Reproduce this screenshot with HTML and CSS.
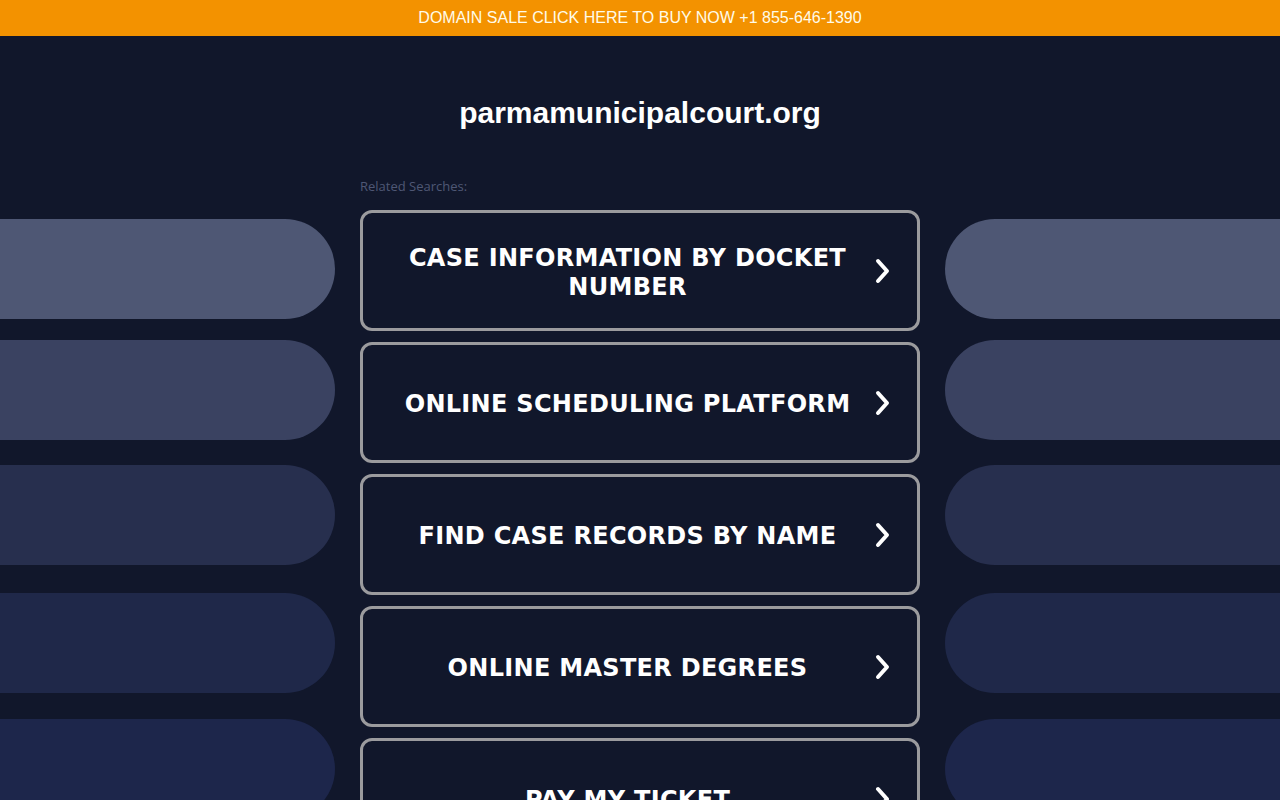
FILE: index.html
```html
<!DOCTYPE html>
<html lang="en">
<head>
<meta charset="utf-8">
<title>parmamunicipalcourt.org</title>
<link rel="stylesheet" href="styles.css">
</head>
<body>
<div class="banner"><a href="#">DOMAIN SALE CLICK HERE TO BUY NOW +1 855-646-1390</a></div>
<header class="header"><h1 class="title">parmamunicipalcourt.org</h1></header>
<main class="main">
  <div class="side side-left">
    <div class="pill p1"></div>
    <div class="pill p2"></div>
    <div class="pill p3"></div>
    <div class="pill p4"></div>
    <div class="pill p5"></div>
  </div>
  <div class="center">
    <div class="label">Related Searches:</div>
    <div class="list">
      <a class="btn" href="#"><span class="btn-text">CASE INFORMATION BY DOCKET NUMBER</span><svg class="chev" viewBox="0 0 15 28" width="15" height="28"><polyline points="3,4 12,14 3,24" /></svg></a>
      <a class="btn" href="#"><span class="btn-text">ONLINE SCHEDULING PLATFORM</span><svg class="chev" viewBox="0 0 15 28" width="15" height="28"><polyline points="3,4 12,14 3,24" /></svg></a>
      <a class="btn" href="#"><span class="btn-text">FIND CASE RECORDS BY NAME</span><svg class="chev" viewBox="0 0 15 28" width="15" height="28"><polyline points="3,4 12,14 3,24" /></svg></a>
      <a class="btn" href="#"><span class="btn-text">ONLINE MASTER DEGREES</span><svg class="chev" viewBox="0 0 15 28" width="15" height="28"><polyline points="3,4 12,14 3,24" /></svg></a>
      <a class="btn" href="#"><span class="btn-text">PAY MY TICKET</span><svg class="chev" viewBox="0 0 15 28" width="15" height="28"><polyline points="3,4 12,14 3,24" /></svg></a>
    </div>
  </div>
  <div class="side side-right">
    <div class="pill p1"></div>
    <div class="pill p2"></div>
    <div class="pill p3"></div>
    <div class="pill p4"></div>
    <div class="pill p5"></div>
  </div>
</main>
</body>
</html>
```
FILE: styles.css
```css
html, body {
  margin: 0;
  padding: 0;
  height: 800px;
  overflow: hidden;
}
body {
  background: #11172b;
  font-family: "Liberation Sans", Arial, sans-serif;
  color: #fff;
}
.banner {
  height: 36px;
  background: #f39200;
  display: flex;
  align-items: center;
  justify-content: center;
}
.banner a {
  color: #fffbe8;
  text-decoration: none;
  font-size: 16px;
  line-height: 20px;
}
.header {
  padding-top: 59px;
  text-align: center;
}
.title {
  margin: 0;
  font-size: 30px;
  line-height: 36px;
  font-weight: bold;
  color: #fff;
}
.main {
  margin-top: 45px;
  display: grid;
  grid-template-columns: 335px 560px 335px;
  column-gap: 25px;
  align-items: start;
}
.side {
  padding-top: 43px;
  display: flex;
  flex-direction: column;
}
.pill {
  height: 100px;
}
.side-left .pill { border-radius: 0 50px 50px 0; }
.side-right .pill { border-radius: 50px 0 0 50px; }
.p1 { background: #4e5774; }
.p2 { background: #3a4261; margin-top: 21px; }
.p3 { background: #272f4e; margin-top: 25px; }
.p4 { background: #1f2849; margin-top: 28px; }
.p5 { background: #1d264b; margin-top: 26px; }
.label {
  font-size: 13px;
  line-height: 20px;
  color: #4f5775;
  font-family: "Open Sans", "Liberation Sans", sans-serif;
}
.list {
  margin-top: 14px;
  display: flex;
  flex-direction: column;
  gap: 11px;
}
.btn {
  box-sizing: border-box;
  height: 121px;
  border: 3px solid #9b9b9e;
  border-radius: 12px;
  display: flex;
  align-items: center;
  padding: 0 27px 0 17px;
  text-decoration: none;
  color: #fff;
}
.btn-text {
  flex: 1;
  text-align: center;
  padding-top: 4px;
  font-family: "DejaVu Sans", Verdana, sans-serif;
  font-weight: bold;
  font-size: 24px;
  line-height: 29px;
  letter-spacing: 0.3px;
}
.chev {
  flex: none;
  fill: none;
  stroke: #fff;
  stroke-width: 4;
  stroke-linecap: round;
  stroke-linejoin: round;
}
```
